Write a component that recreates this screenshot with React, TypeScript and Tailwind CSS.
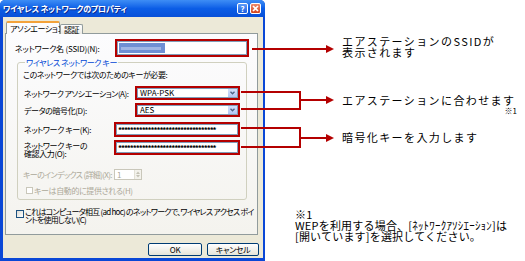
const UI = "font-['Noto_Sans_CJK_JP',sans-serif] [font-feature-settings:'palt']";
const NOTE = "font-['Noto_Sans_CJK_JP',sans-serif] text-black whitespace-nowrap";
const RED = "border-2 border-[#b40000]";

function TitleButtons() {
  return (
    <div className="flex gap-[2px]">
      <div className="w-[11px] h-[11px] rounded-[2px] border border-white bg-gradient-to-b from-[#5d9cf9] to-[#1c5fe0] flex items-center justify-center text-[8px] font-bold text-white leading-none tracking-normal">
        ?
      </div>
      <div className="w-[11px] h-[11px] rounded-[2px] border border-white bg-gradient-to-b from-[#ee8a6a] to-[#d2421c] flex items-center justify-center">
        <svg width="7" height="7" viewBox="0 0 7 7">
          <path d="M1 1L6 6M6 1L1 6" stroke="white" strokeWidth="1.6" />
        </svg>
      </div>
    </div>
  );
}

function Select({ value }: { value: string }) {
  return (
    <div className={`w-[105px] h-[14px] shrink-0 ${RED}`}>
      <div className="flex items-center h-full border border-[#7f9db9] bg-white pl-[2px]">
        <span className="flex-1 text-[8px] leading-none tracking-normal">{value}</span>
        <div className="w-[9px] h-full bg-gradient-to-b from-[#d4e0fb] to-[#b2c6f4] flex items-center justify-center">
          <svg width="5" height="4" viewBox="0 0 5 4">
            <path d="M0.5 0.8L2.5 2.8L4.5 0.8" stroke="#4d6185" strokeWidth="1.3" fill="none" />
          </svg>
        </div>
      </div>
    </div>
  );
}

function KeyInput() {
  return (
    <div className={`w-[126px] h-[15px] shrink-0 ${RED}`}>
      <div className="flex items-center h-full border border-[#7f9db9] bg-white pl-[1px] overflow-hidden">
        <span className="text-[8px] font-bold leading-none tracking-[-1.1px]">{"*".repeat(33)}</span>
      </div>
    </div>
  );
}

function Dialog() {
  return (
    <div className={`flex flex-col w-[265px] h-[261px] shrink-0 bg-[#0a47d6] rounded-t-[5px] overflow-hidden whitespace-nowrap ${UI}`}>
      <div className="flex items-center h-[17px] pl-[3px] pr-[4px] bg-gradient-to-b from-[#3d8df5] via-[#0b5de6] to-[#0850d8]">
        <span className="flex-1 text-[8px] font-bold text-white leading-none tracking-[-0.2px] [text-shadow:1px_1px_#0a2a8c]">
          ワイヤレス ネットワークのプロパティ
        </span>
        <TitleButtons />
      </div>

      <div className="flex flex-col flex-1 ml-[3px] mr-[2px] mb-[3px] bg-[#ece9d8] pt-[4px] pl-[2px] pr-[5px] text-[8px] leading-[9px] tracking-[-0.4px] text-black">
        {/* Tabs */}
        <div className="relative z-10 flex items-end h-[13px] -mb-px pl-[1px]">
          <div className="w-[54px] h-[13px] border border-b-0 border-[#919b9c] border-t-[2px] border-t-[#f3a23a] bg-[#fcfcfe] rounded-t-[2px] pl-[3px] pt-[1px]">
            アソシエーション
          </div>
          <div className="w-[23px] h-[10px] border border-b-0 border-[#919b9c] bg-gradient-to-b from-white to-[#ecebe6] rounded-t-[2px] pl-[3px]">
            認証
          </div>
        </div>

        {/* Panel */}
        <div className="flex flex-col h-[202px] border border-[#919b9c] bg-gradient-to-b from-[#fcfcfe] to-[#f4f3ee] pt-[5px]">
          <div className="flex items-center h-[18px] pl-[9px]">
            <span className="w-[100px] tracking-[-0.2px]">ネットワーク名 (SSID)(N):</span>
            <div className={`w-[134px] h-[18px] ${RED}`}>
              <div className="flex items-center h-full border border-[#7f9db9] bg-white pl-[1px]">
                <div className="w-[46px] h-[10px] bg-[#6e8fd4] flex items-center px-[2px]">
                  <div className="w-[40px] h-[3px] bg-[#9fb6e6]" />
                </div>
              </div>
            </div>
          </div>

          <fieldset className="mt-px ml-[11px] w-[230px] h-[142px] border border-[#d0d0bf] rounded-[3px] pl-[5px]">
            <legend className="ml-[2px] px-[1px] text-[#0046d5]">ワイヤレス ネットワーク キー</legend>
            <div className="mt-[3px]">このネットワークでは次のためのキーが必要:</div>

            <div className="flex items-center h-[14px] mt-[7px] pl-[1px]">
              <span className="w-[111px] tracking-[-0.5px]">ネットワーク アソシエーション(A):</span>
              <Select value="WPA-PSK" />
            </div>
            <div className="flex items-center h-[14px] mt-[3px] pl-[1px]">
              <span className="w-[111px]">データの暗号化(D):</span>
              <Select value="AES" />
            </div>
            <div className="flex items-center h-[15px] mt-[5px] pl-[1px]">
              <span className="w-[90px]">ネットワーク キー(K):</span>
              <KeyInput />
            </div>
            <div className="flex items-start h-[17px] mt-[3px] pl-[1px]">
              <span className="w-[90px] mt-[2px] leading-[8px]">
                ネットワーク キーの
                <br />
                確認入力(O):
              </span>
              <KeyInput />
            </div>

            <div className="flex items-center h-[11px] mt-[12px] text-[#aca899]">
              <span className="w-[91px] tracking-[-0.65px]">キーのインデックス (詳細)(X):</span>
              <div className="flex w-[28px] h-[11px] border border-[#c9c7ba] bg-white">
                <span className="flex-1 pl-[2px] text-[8px] leading-[9px]">1</span>
                <div className="flex flex-col w-[7px] border-l border-[#e3e1d6] bg-[#f3f2ec]">
                  <span className="flex-1 flex items-center justify-center">
                    <svg width="4" height="3" viewBox="0 0 4 3"><path d="M0 3L2 0.5L4 3Z" fill="#c4c2b6" /></svg>
                  </span>
                  <span className="flex-1 flex items-center justify-center">
                    <svg width="4" height="3" viewBox="0 0 4 3"><path d="M0 0L2 2.5L4 0Z" fill="#c4c2b6" /></svg>
                  </span>
                </div>
              </div>
            </div>
            <div className="flex items-center gap-[1px] mt-[6px] pl-[3px] text-[#aca899]">
              <div className="w-[7px] h-[7px] border border-[#c9c7ba] bg-white" />
              <span>キーは自動的に提供される(H)</span>
            </div>
          </fieldset>

          <div className="flex items-start gap-[1px] mt-[8px] pl-[10px]">
            <div className="w-[8px] h-[8px] mt-[2px] border border-[#1c5180] bg-gradient-to-br from-[#dcdcd5] to-white shrink-0" />
            <span className="leading-[8px] tracking-[-0.75px]">
              これはコンピュータ相互 (ad hoc) のネットワークで、ワイヤレス アクセス ポイ
              <br />
              ントを使用しない(C)
            </span>
          </div>
        </div>

        {/* Buttons */}
        <div className="flex justify-end gap-[5px] mt-[8px] -mr-px">
          <div className="w-[54px] h-[13px] rounded-[2px] border border-[#003c74] bg-gradient-to-b from-white to-[#e6e4d9] flex items-center justify-center leading-none">
            OK
          </div>
          <div className="w-[52px] h-[13px] rounded-[2px] border border-[#003c74] bg-gradient-to-b from-white to-[#e6e4d9] flex items-center justify-center leading-none">
            キャンセル
          </div>
        </div>
      </div>
    </div>
  );
}

function Notes() {
  return (
    <div className={`flex flex-col flex-1 ${NOTE}`}>
      <p className="mt-[36px] pl-[77px] text-[11px] leading-[11px] tracking-[1.4px]">
        エアステーションのSSIDが
        <br />
        表示されます
      </p>
      <p className="mt-[37px] pl-[77px] text-[11px] leading-[11px] tracking-[1.4px]">
        エアステーションに合わせます
      </p>
      <p className="mt-[1px] pr-[8px] text-right text-[8px] leading-[8px]">※1</p>
      <p className="mt-[17px] pl-[77px] text-[11px] leading-[11px] tracking-[1.4px]">
        暗号化キーを入力します
      </p>
      <p className="mt-[66px] pl-[30px] text-[11px] leading-[11px] tracking-[0.2px]">
        ※1
        <br />
        WEPを利用する場合、[ﾈｯﾄﾜｰｸｱｿｼｴｰｼｮﾝ]は
        <br />
        [開いています]を選択してください。
      </p>
    </div>
  );
}

function Connectors() {
  const c = "#b40000";
  return (
    <svg className="absolute inset-0 pointer-events-none" width="525" height="261" viewBox="0 0 525 261">
      <g stroke={c} strokeWidth="2" fill="none">
        <path d="M252 49H327" />
        <path d="M241 92H300V109H241" />
        <path d="M300 100H327" />
        <path d="M241 128H300V147H241" />
        <path d="M300 138H327" />
      </g>
      <g fill={c}>
        <path d="M326 45L334 49L326 53Z" />
        <path d="M326 96L334 100L326 104Z" />
        <path d="M326 134L334 138L326 142Z" />
      </g>
    </svg>
  );
}

export default function App() {
  return (
    <div className="relative flex w-[525px] h-[261px] bg-white overflow-hidden">
      <Dialog />
      <Notes />
      <Connectors />
    </div>
  );
}
